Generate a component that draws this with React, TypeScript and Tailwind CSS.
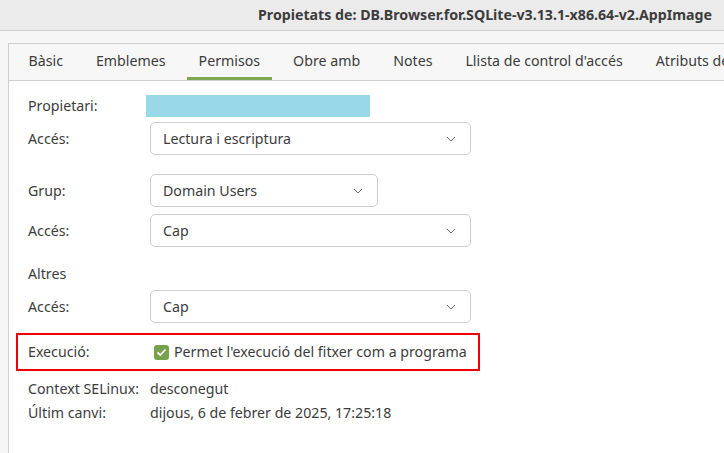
import React from 'react';

const font = { fontFamily: '"Noto Sans", "Open Sans", sans-serif' };

const Chevron: React.FC = () => (
  <svg width="10" height="6" viewBox="0 0 10 6" className="shrink-0">
    <path d="M1 1 L5 5 L9 1" fill="none" stroke="#6b6b6b" strokeWidth="1" />
  </svg>
);

const Combo: React.FC<{ value: string; width: string }> = ({ value, width }) => (
  <div className={`${width} h-[33px] flex items-center justify-between pl-[12px] pr-[14px] rounded-[5px] border border-[#cdcdcd] bg-white`}>
    <span>{value}</span>
    <Chevron />
  </div>
);

const App: React.FC = () => {
  const tabs = ['Bàsic', 'Emblemes', 'Permisos', 'Obre amb', 'Notes', "Llista de control d'accés", 'Atributs de'];

  return (
    <div className="w-[724px] h-[453px] overflow-hidden bg-[#f6f6f6] text-[#3c3c3c] text-[14.2px]" style={font}>
      <div className="h-[31px] flex items-center justify-end pr-[12px] bg-[#ebebeb] border-b border-[#cfcfcf] font-bold whitespace-nowrap">
        Propietats de: DB.Browser.for.SQLite-v3.13.1-x86.64-v2.AppImage
      </div>
      <div className="pt-[12px] pl-[8px]">
        <div className="border-l border-t border-[#cfcfcf] h-[410px] bg-white">
          <div className="h-[37px] flex items-stretch pl-[8px] gap-[10px] bg-[#f7f7f7] border-b border-[#cfcfcf] whitespace-nowrap">
            {tabs.map(t => (
              <div key={t} className={`flex items-center px-[11.5px] border-b-[3px] ${t === 'Permisos' ? 'border-[#7fa650]' : 'border-transparent'}`}>
                {t}
              </div>
            ))}
          </div>
          <div className="pl-[19px] pt-[14px]">
            <div className="flex items-center h-[22px]">
              <span className="w-[118px]">Propietari:</span>
              <div className="w-[224px] h-[22px] bg-[#98d8e8]" />
            </div>
            <div className="flex items-center mt-[5px]">
              <span className="w-[122px]">Accés:</span>
              <Combo value="Lectura i escriptura" width="w-[321px]" />
            </div>
            <div className="flex items-center mt-[19px]">
              <span className="w-[122px]">Grup:</span>
              <Combo value="Domain Users" width="w-[228px]" />
            </div>
            <div className="flex items-center mt-[7px]">
              <span className="w-[122px]">Accés:</span>
              <Combo value="Cap" width="w-[321px]" />
            </div>
            <div className="h-[22px] flex items-center mt-[16px]">Altres</div>
            <div className="flex items-center mt-[5px]">
              <span className="w-[122px]">Accés:</span>
              <Combo value="Cap" width="w-[321px]" />
            </div>
            <div className="ml-[-12px] mt-[10px] w-[464px] h-[38px] border-2 border-[#f00000] flex items-center pl-[10px]">
              <span className="w-[126px]">Execució:</span>
              <div className="w-[15px] h-[15px] rounded-[3px] bg-[#76a24e] flex items-center justify-center">
                <svg width="11" height="9" viewBox="0 0 11 9">
                  <path d="M1.5 4.5 L4.2 7 L9.5 1.5" fill="none" stroke="white" strokeWidth="1.8" />
                </svg>
              </div>
              <span className="ml-[5px]">Permet l'execució del fitxer com a programa</span>
            </div>
            <div className="flex items-center h-[24px] mt-[6px]">
              <span className="w-[122px]">Context SELinux:</span>
              <span>desconegut</span>
            </div>
            <div className="flex items-center h-[24px]">
              <span className="w-[122px]">Últim canvi:</span>
              <span>dijous, 6 de febrer de 2025, 17:25:18</span>
            </div>
          </div>
        </div>
      </div>
    </div>
  );
};

export default App;
